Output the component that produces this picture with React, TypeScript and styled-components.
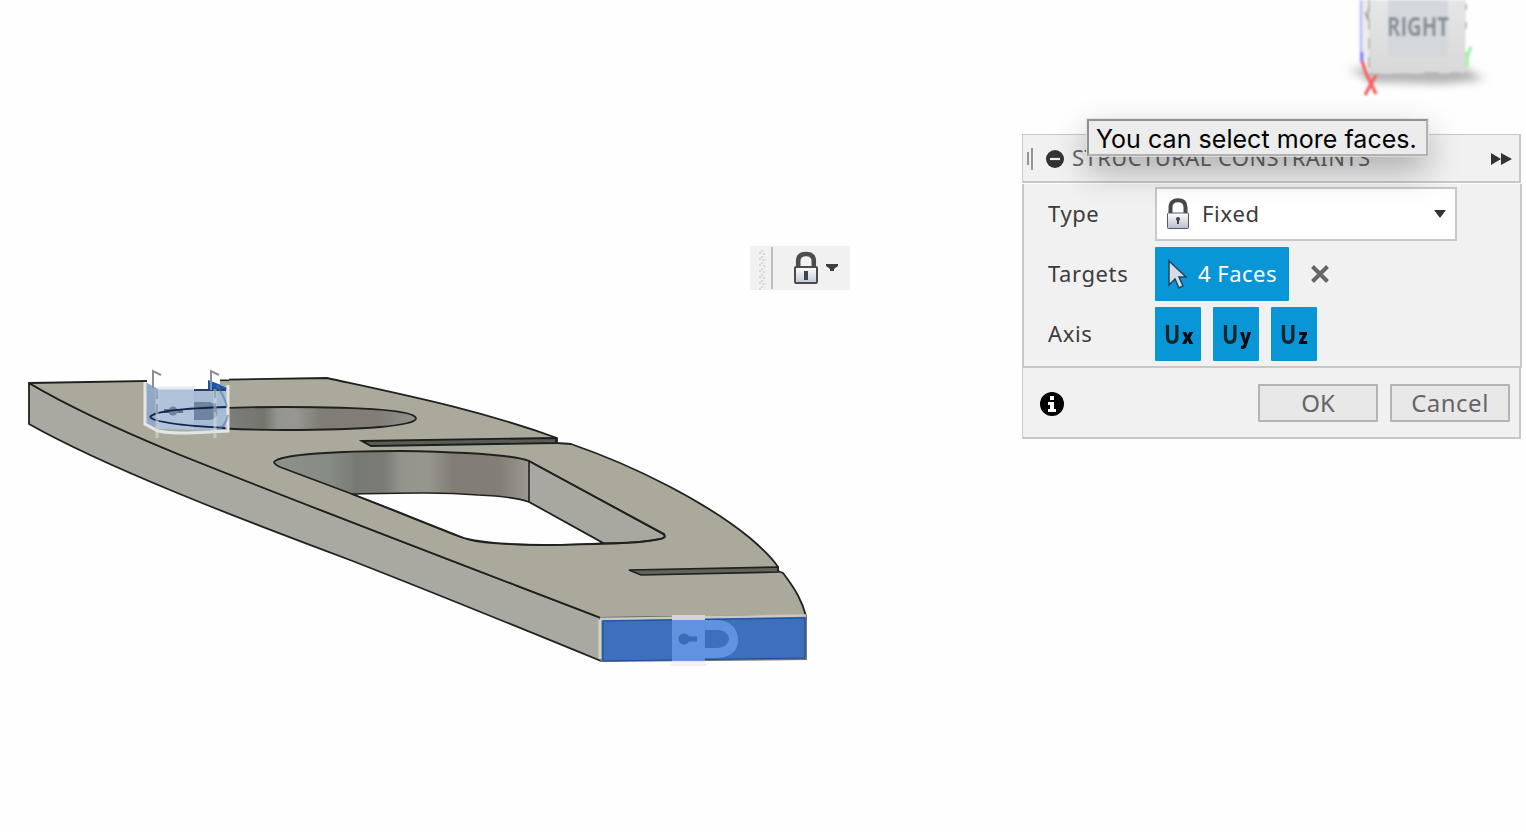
import React from "react";
import styled, { createGlobalStyle } from "styled-components";

const GlobalStyle = createGlobalStyle`
  body { margin: 0; background: #fff; }
  * { box-sizing: border-box; }
`;

const Viewport = styled.main`
  position: relative;
  width: 1526px;
  height: 832px;
  overflow: hidden;
  background: #fefefe;
  font-family: "Noto Sans", "Open Sans", sans-serif;
`;

const ModelCanvas = styled.svg`
  display: block;
  width: 850px;
  height: 832px;
`;

const ViewCube = styled.svg`
  position: absolute;
  left: 1330px;
  top: 0;
  width: 170px;
  height: 110px;
`;

const MiniToolbar = styled.div`
  position: absolute;
  left: 750px;
  top: 246px;
  width: 100px;
  height: 44px;
  display: flex;
  align-items: center;
  background: #f1f1f1;
`;

const Panel = styled.section`
  position: absolute;
  left: 1022px;
  top: 134px;
  width: 500px;
  display: flex;
  flex-direction: column;
`;

const PanelHeader = styled.header`
  display: flex;
  align-items: center;
  width: 499px;
  height: 49px;
  padding: 2px 7px 0 4px;
  background: #f1f1f1;
  border: solid #c8c8c8;
  border-width: 1px 2px 2px 1px;
`;

const PanelTitle = styled.h1`
  margin: 0 auto 0 7px;
  padding-bottom: 4px;
  font-size: 22px;
  font-weight: 400;
  line-height: 30px;
  letter-spacing: 0.42px;
  white-space: nowrap;
  color: #666;
`;

const PanelBody = styled.div`
  display: flex;
  flex-direction: column;
  gap: 6px;
  height: 184px;
  padding: 3px 0 0 24px;
  background: #f1f1f1;
  border: solid #c8c8c8;
  border-width: 0 2px 2px 2px;
  margin-top: 1px;
`;

const Row = styled.div`
  display: flex;
  align-items: center;
  height: 54px;
`;

const Label = styled.span`
  width: 107px;
  padding-bottom: 2px;
  font-size: 22px;
  line-height: 30px;
  letter-spacing: 0.6px;
  color: #3c3c3c;
`;

const Select = styled.div`
  display: flex;
  align-items: center;
  width: 302px;
  height: 54px;
  padding: 0 9px 0 9px;
  background: #fff;
  border: 2px solid #c8c8c8;
  font-size: 22px;
  letter-spacing: 0.7px;
  color: #3c3c3c;
`;

const SelectText = styled.span`
  margin: 0 auto 0 12px;
  padding-bottom: 2px;
`;

const SelectionButton = styled.button`
  display: flex;
  align-items: center;
  gap: 11px;
  width: 134px;
  height: 54px;
  padding: 0 0 0 12px;
  border: 0;
  border-radius: 1px;
  background: #0896d7;
  color: #fff;
  font: 400 22px "Noto Sans", sans-serif;
  letter-spacing: 0.5px;
  white-space: nowrap;
`;

const SelectionCount = styled.span`
  padding-bottom: 2px;
`;

const ClearButton = styled.button`
  display: flex;
  margin-left: 21px;
  padding: 0;
  border: 0;
  background: none;
`;

const AxisButton = styled.button`
  display: flex;
  align-items: baseline;
  justify-content: center;
  width: 46px;
  height: 54px;
  margin-right: 12px;
  padding: 10px 0 0 2px;
  border: 0;
  border-radius: 1px;
  background: #0896d7;
  color: #1b252b;
  font: 700 27px/34px "Open Sans", sans-serif;
`;

const AxisLetter = styled.span`
  display: inline-block;
  width: 18px;
  transform: scaleX(0.8);
  transform-origin: left;
`;

const AxisSub = styled.span`
  display: inline-block;
  width: 12px;
  font-size: 21px;
  font-weight: 800;
  color: #060a0d;
  transform: scaleX(0.86);
  transform-origin: left;
`;

const PanelFooter = styled.footer`
  display: flex;
  align-items: center;
  gap: 12px;
  width: 499px;
  height: 71px;
  padding: 0 9px 0 17px;
  background: #f1f1f1;
  border: solid #c8c8c8;
  border-width: 0 2px 2px 1px;
`;

const DialogButton = styled.button<{ $spacing?: number }>`
  width: 120px;
  height: 38px;
  padding: 0;
  border: 2px solid #b4b4b4;
  border-radius: 1px;
  background: #e8e8e8;
  color: #666;
  font: 400 24px/32px "Noto Sans", sans-serif;
  letter-spacing: ${(p) => p.$spacing ?? 0}px;
`;

const InfoBadge = styled.svg`
  margin: 2px auto 0 0;
`;

const Tooltip = styled.div`
  position: absolute;
  left: 1087px;
  top: 119px;
  width: 341px;
  height: 37px;
  padding: 2px 0 0 7px;
  display: flex;
  align-items: center;
  background: #ececec;
  border: 2px solid;
  border-color: #929292 #b2b2b2 #b2b2b2 #929292;
  box-shadow: 0 0 0 1px rgba(225, 225, 225, 0.8), 0 14px 34px rgba(0, 0, 0, 0.3);
  font: 400 25px/30px Inter, sans-serif;
  letter-spacing: 0.04px;
  white-space: nowrap;
  color: #000;
`;

function PadlockIcon() {
  return (
    <svg width="24" height="32" viewBox="0 0 24 32">
      <defs>
        <linearGradient id="padlockBody" x2="0" y2="1">
          <stop offset="0" stopColor="#fff" />
          <stop offset="1" stopColor="#b9bdcc" />
        </linearGradient>
      </defs>
      <path d="M4.500 16V9.500C4.500 4.500 7.500 2.300 12 2.300s7.500 2.200 7.500 7.200V16" fill="none" stroke="#484848" strokeWidth="4" />
      <rect x="1.500" y="15" width="21" height="15.500" rx="1" fill="url(#padlockBody)" stroke="#555a63" />
      <circle cx="12" cy="21" r="2" fill="#444" />
      <path d="M11 21h2v5h-2z" fill="#444" />
    </svg>
  );
}

function ToolbarPadlock() {
  return (
    <svg width="94" height="44" viewBox="0 0 94 44">
      <defs>
        <linearGradient id="toolLock" x2="0" y2="1">
          <stop offset="0" stopColor="#fff" />
          <stop offset="1" stopColor="#bfc8d8" />
        </linearGradient>
      </defs>
      <path d="M12 4v40M10 6v38M14 7v36" stroke="#d6d6d6" strokeWidth="2" strokeDasharray="2 4" />
      <path d="M22 1v42" stroke="#bdbdbd" strokeWidth="2" />
      <path d="M48.200 21v-6c0-5 3-7 7.800-7s7.800 2 7.800 7v6" fill="none" stroke="#4d4d4d" strokeWidth="4.500" />
      <rect x="45" y="21" width="22" height="16" rx="1" fill="url(#toolLock)" stroke="#4c4c4c" strokeWidth="2" />
      <path d="M56 25v9" stroke="#444" strokeWidth="4" />
      <path d="M76 18h12v2l-4 3v2h-4v-2l-4-3z" fill="#3f3f3f" />
    </svg>
  );
}

function Model() {
  return (
    <ModelCanvas viewBox="0 0 850 832">
      <defs>
        <linearGradient id="roundWall" gradientUnits="userSpaceOnUse" x1="150" x2="416" y1="0" y2="0">
          <stop offset="0" stopColor="#8a8f89" />
          <stop offset=".37" stopColor="#787974" />
          <stop offset=".43" stopColor="#74756f" />
          <stop offset=".48" stopColor="#94958f" />
          <stop offset=".55" stopColor="#979790" />
          <stop offset=".64" stopColor="#817d75" />
          <stop offset=".86" stopColor="#827e77" />
          <stop offset="1" stopColor="#92928e" />
        </linearGradient>
        <linearGradient id="openWall" gradientUnits="userSpaceOnUse" x1="274" x2="529" y1="0" y2="0">
          <stop offset="0" stopColor="#8f918b" />
          <stop offset=".22" stopColor="#868b84" />
          <stop offset=".32" stopColor="#777b74" />
          <stop offset=".43" stopColor="#7a7b74" />
          <stop offset=".5" stopColor="#94948d" />
          <stop offset=".6" stopColor="#97978f" />
          <stop offset=".7" stopColor="#827e75" />
          <stop offset=".88" stopColor="#827e75" />
          <stop offset="1" stopColor="#999891" />
        </linearGradient>
        <filter id="soften"><feGaussianBlur stdDeviation=".6" /></filter>
      </defs>

      <g stroke="#20211f" strokeWidth="1.800" strokeLinejoin="round">
        <path d="M29 383C68 406 112 427 178 454C300 503 450 560 601 618V661C518 627 432 592 350 560C240 519 105 467 29 424Z" fill="#a9a9a1" />
        <path d="M29 383L327 378C405 395 480 410 557 438V443L571 444C635 466 706 502 750 538C764 550 772 558 778 567V571L783 573C796 590 802 601 806 616L601 618C450 560 300 503 178 454C112 427 68 406 29 383Z" fill="#aba99c" />
      </g>
      <path d="M150 418C154 411 210 407 285 407S413 410 416 418C417 426 363 430 285 430C215 430 159 424 150 418Z" fill="url(#roundWall)" stroke="#20211f" strokeWidth="1.800" />
      <path d="M274 462C280 454 340 451 400 451C460 452 515 455 529 461L663 534Q667 538 660 539C637 544 599 544 553 545C510 545 480 542 464 538L352 494L280 467Q274 464 274 462Z" fill="url(#openWall)" />
      <path d="M529 461L663 534Q667 538 660 539C640 543 620 543 603 543L529 502Z" fill="#a8a8a0" stroke="#20211f" strokeWidth="1.600" />
      <path d="M352 494C404 493 440 492 478 495C502 496 518 498 529 502L603 543C580 545 510 546 481 542C470 541 463 538 455 535Z" fill="#fefefe" stroke="#20211f" strokeWidth="1.600" />
      <path d="M274 462C280 454 340 451 400 451C460 452 515 455 529 461L664 534Q667 538 660 539C637 544 599 544 553 545C510 545 480 542 464 538C425 523 387 507 352 494L280 467Q274 464 274 462Z" fill="none" stroke="#20211f" strokeWidth="1.800" />
      <path d="M362 441L556 438L557 443L371 446Z" fill="#5b5c57" />
      <path d="M362 441L556 438V443L371 446Z" fill="none" stroke="#1d1f1c" strokeWidth="1.800" />
      <path d="M629 570L778 567V572L641 575Z" fill="#63635d" stroke="#20211f" strokeWidth="1.700" />

      <path d="M147 375L229 375V392H147Z" fill="#fefefe" />
      <path d="M208 380L229 388V392H208Z" fill="#1554b1" />
      <path d="M220 380L229 380V389L220 385Z" fill="#aba99c" />
      <path d="M220 380.300H229" stroke="#20211f" strokeWidth="1.600" />
      <path d="M145 382L158 389H228V426L219 430C196 431 174 429 158 429L145 423Z" fill="#b1c3da" />
      <path d="M145 382L158 389V429L145 423Z" fill="#91a9c5" />
      <path d="M194 389H228V430H194Z" fill="#9db5d3" opacity=".6" />
      <path d="M194 402H210Q219 405 217 415Q215 420 209 420H194Z" fill="#6e849f" />
      <path d="M164 411H183" stroke="#5c7391" strokeWidth="4" />
      <circle cx="173" cy="411" r="4.500" fill="#6c849f" />
      <path d="M150 417C154 411 191 408 229 407M150 417Q155 424 225 428" fill="none" stroke="#10254c" strokeWidth="1.800" />
      <path d="M145 382V424L158 431C177 435 202 432 228 431V385" fill="none" stroke="#e4e6e4" strokeWidth="3" filter="url(#soften)" />
      <path d="M158 388H194" stroke="#e6ebef" strokeWidth="3" />
      <path d="M194 390H226" stroke="#253f62" strokeWidth="2" />
      <path d="M161 385H197" stroke="#c6c6c6" strokeWidth="2" filter="url(#soften)" />
      <path d="M161 375L153 371V388M219 375L211 371V390" fill="none" stroke="#8e8e8e" strokeWidth="2" filter="url(#soften)" />
      <path d="M157 390V438M215 389V438" stroke="#dedfdd" strokeWidth="3" opacity=".55" />
      <path d="M157 390V419M215 389V417" stroke="#687d95" strokeWidth="1" strokeDasharray="9 5" />
      <path d="M217 385Q225 398 227 407M217 429Q225 428 228 415" fill="none" stroke="#607895" strokeWidth="2" opacity=".6" />

      <path d="M601 618L806 616V659L601 661Z" fill="#3d6fbc" stroke="#77746f" strokeWidth="2" />
      <path d="M600 619L806 615.500" stroke="#c9c9c0" strokeWidth="2.500" />
      <path d="M600 620V659" stroke="#d2d3c8" strokeWidth="3" />
      <path d="M603 621L805 618V658L603 661Z" fill="#3d6fbc" stroke="#194f9f" strokeWidth="1" />
      <path d="M672 616H705V662H672Z" fill="#6192df" />
      <path d="M705 620H718C731 621 738 629 738 640S731 657 718 658H705V648H716C726 648 729 642 729 638C727 632 723 630 717 630H705Z" fill="#6192df" />
      <path d="M685 639H697" stroke="#3a6bb7" strokeWidth="5" />
      <circle cx="684" cy="639" r="5.500" fill="#3a6bb7" />
      <path d="M672 615H705V620H672Z" fill="#d6d6d0" />
      <path d="M672 662H705M670 665H707" stroke="#f0f0f0" strokeWidth="2.500" filter="url(#soften)" />
    </ModelCanvas>
  );
}

function OrientationCube() {
  return (
    <ViewCube viewBox="0 0 170 110">
      <defs>
        <filter id="cubeShadow" x="-30%" y="-100%" width="160%" height="300%"><feGaussianBlur stdDeviation="6 4" /></filter>
        <filter id="edgeBlur"><feGaussianBlur stdDeviation=".8" /></filter>
        <linearGradient id="cubeFace" x2="0" y2="1"><stop stopColor="#e5e6e7" /><stop offset="1" stopColor="#d8d8d8" /></linearGradient>
      </defs>
      <path d="M20 68L136 68L154 80L112 84L40 82Z" fill="#b2b2b2" filter="url(#cubeShadow)" />
      <g filter="url(#edgeBlur)">
        <path d="M30 0H136L135 69Q135 73 130 73L40 74L31 62Z" fill="url(#cubeFace)" />
        <path d="M30 0H39V73L31 62Z" fill="#ececec" />
        <path d="M58 0H118V57H58Z" fill="#d4d8dc" />
        <path d="M39 0V73" stroke="#aaa" strokeWidth="1.500" strokeDasharray="11 8" />
        <path d="M35 12L38 20V9" fill="none" stroke="#999" strokeWidth="1.500" />
        <path d="M31 0V62" stroke="#b9b9fb" strokeWidth="2.500" />
        <path d="M32 52V61" stroke="#6868ff" strokeWidth="2.500" />
        <path d="M32 61L37 75L46 94M46 75L35 95" fill="none" stroke="#f36464" strokeWidth="3.500" />
        <path d="M136 52V55M141 47L137 57V67" fill="none" stroke="#a8efaa" strokeWidth="3.500" />
        <path d="M40 74H50M62 74.500H80M94 73H109M120 73H130" stroke="#b7b7b7" strokeWidth="2" />
        <path d="M136 4V10M136 22V29" stroke="#aaa" strokeWidth="1.500" />
        <text x="57" y="35.500" textLength="62" lengthAdjust="spacingAndGlyphs" fill="#878e95" fontFamily="Open Sans, sans-serif" fontSize="27" fontWeight="700">RIGHT</text>
      </g>
    </ViewCube>
  );
}

const axes = ["x", "y", "z"];

export default function App() {
  return (
    <Viewport>
      <GlobalStyle />
      <Model />
      <OrientationCube />
      <MiniToolbar><ToolbarPadlock /></MiniToolbar>
      <Panel>
        <PanelHeader>
          <svg width="38" height="24" viewBox="0 0 38 24">
            <path d="M1 5v13M5 1v22" stroke="#777" strokeWidth="1.500" />
            <circle cx="28" cy="12" r="9" fill="#333" />
            <path d="M23 12h10" stroke="#eee" strokeWidth="2.200" />
          </svg>
          <PanelTitle>STRUCTURAL CONSTRAINTS</PanelTitle>
          <svg width="21" height="12" viewBox="0 0 21 12"><path d="M0 0l10 6-10 6zM10 0l11 6-11 6z" fill="#333" /></svg>
        </PanelHeader>
        <PanelBody>
          <Row>
            <Label>Type</Label>
            <Select>
              <PadlockIcon />
              <SelectText>Fixed</SelectText>
              <svg width="12" height="8" viewBox="0 0 12 8"><path d="M0 0h12L6 8z" fill="#333" /></svg>
            </Select>
          </Row>
          <Row>
            <Label>Targets</Label>
            <SelectionButton>
              <svg width="20" height="32" viewBox="0 0 20 32">
                <path d="M2 3v24l6-6 4 9 4-2-4-9h7z" fill="#d8dae6" stroke="#1b455d" strokeWidth="1.500" />
              </svg>
              <SelectionCount>4 Faces</SelectionCount>
            </SelectionButton>
            <ClearButton aria-label="Clear selection">
              <svg width="20" height="20" viewBox="0 0 20 20"><path d="M2.500 2.500l15 15m0-15l-15 15" stroke="#666" strokeWidth="4" /></svg>
            </ClearButton>
          </Row>
          <Row>
            <Label>Axis</Label>
            {axes.map((axis) => (
              <AxisButton key={axis}><AxisLetter>U</AxisLetter><AxisSub>{axis}</AxisSub></AxisButton>
            ))}
          </Row>
        </PanelBody>
        <PanelFooter>
          <InfoBadge width="24" height="24" viewBox="0 0 24 24">
            <circle cx="12" cy="12" r="12" fill="#000" />
            <path d="M10 4h4v4h-4zM9 10h5v7h2v3H8v-3h2v-4H8v-3z" fill="#fff" />
          </InfoBadge>
          <DialogButton>OK</DialogButton>
          <DialogButton $spacing={0.5}>Cancel</DialogButton>
        </PanelFooter>
      </Panel>
      <Tooltip>You can select more faces.</Tooltip>
    </Viewport>
  );
}
